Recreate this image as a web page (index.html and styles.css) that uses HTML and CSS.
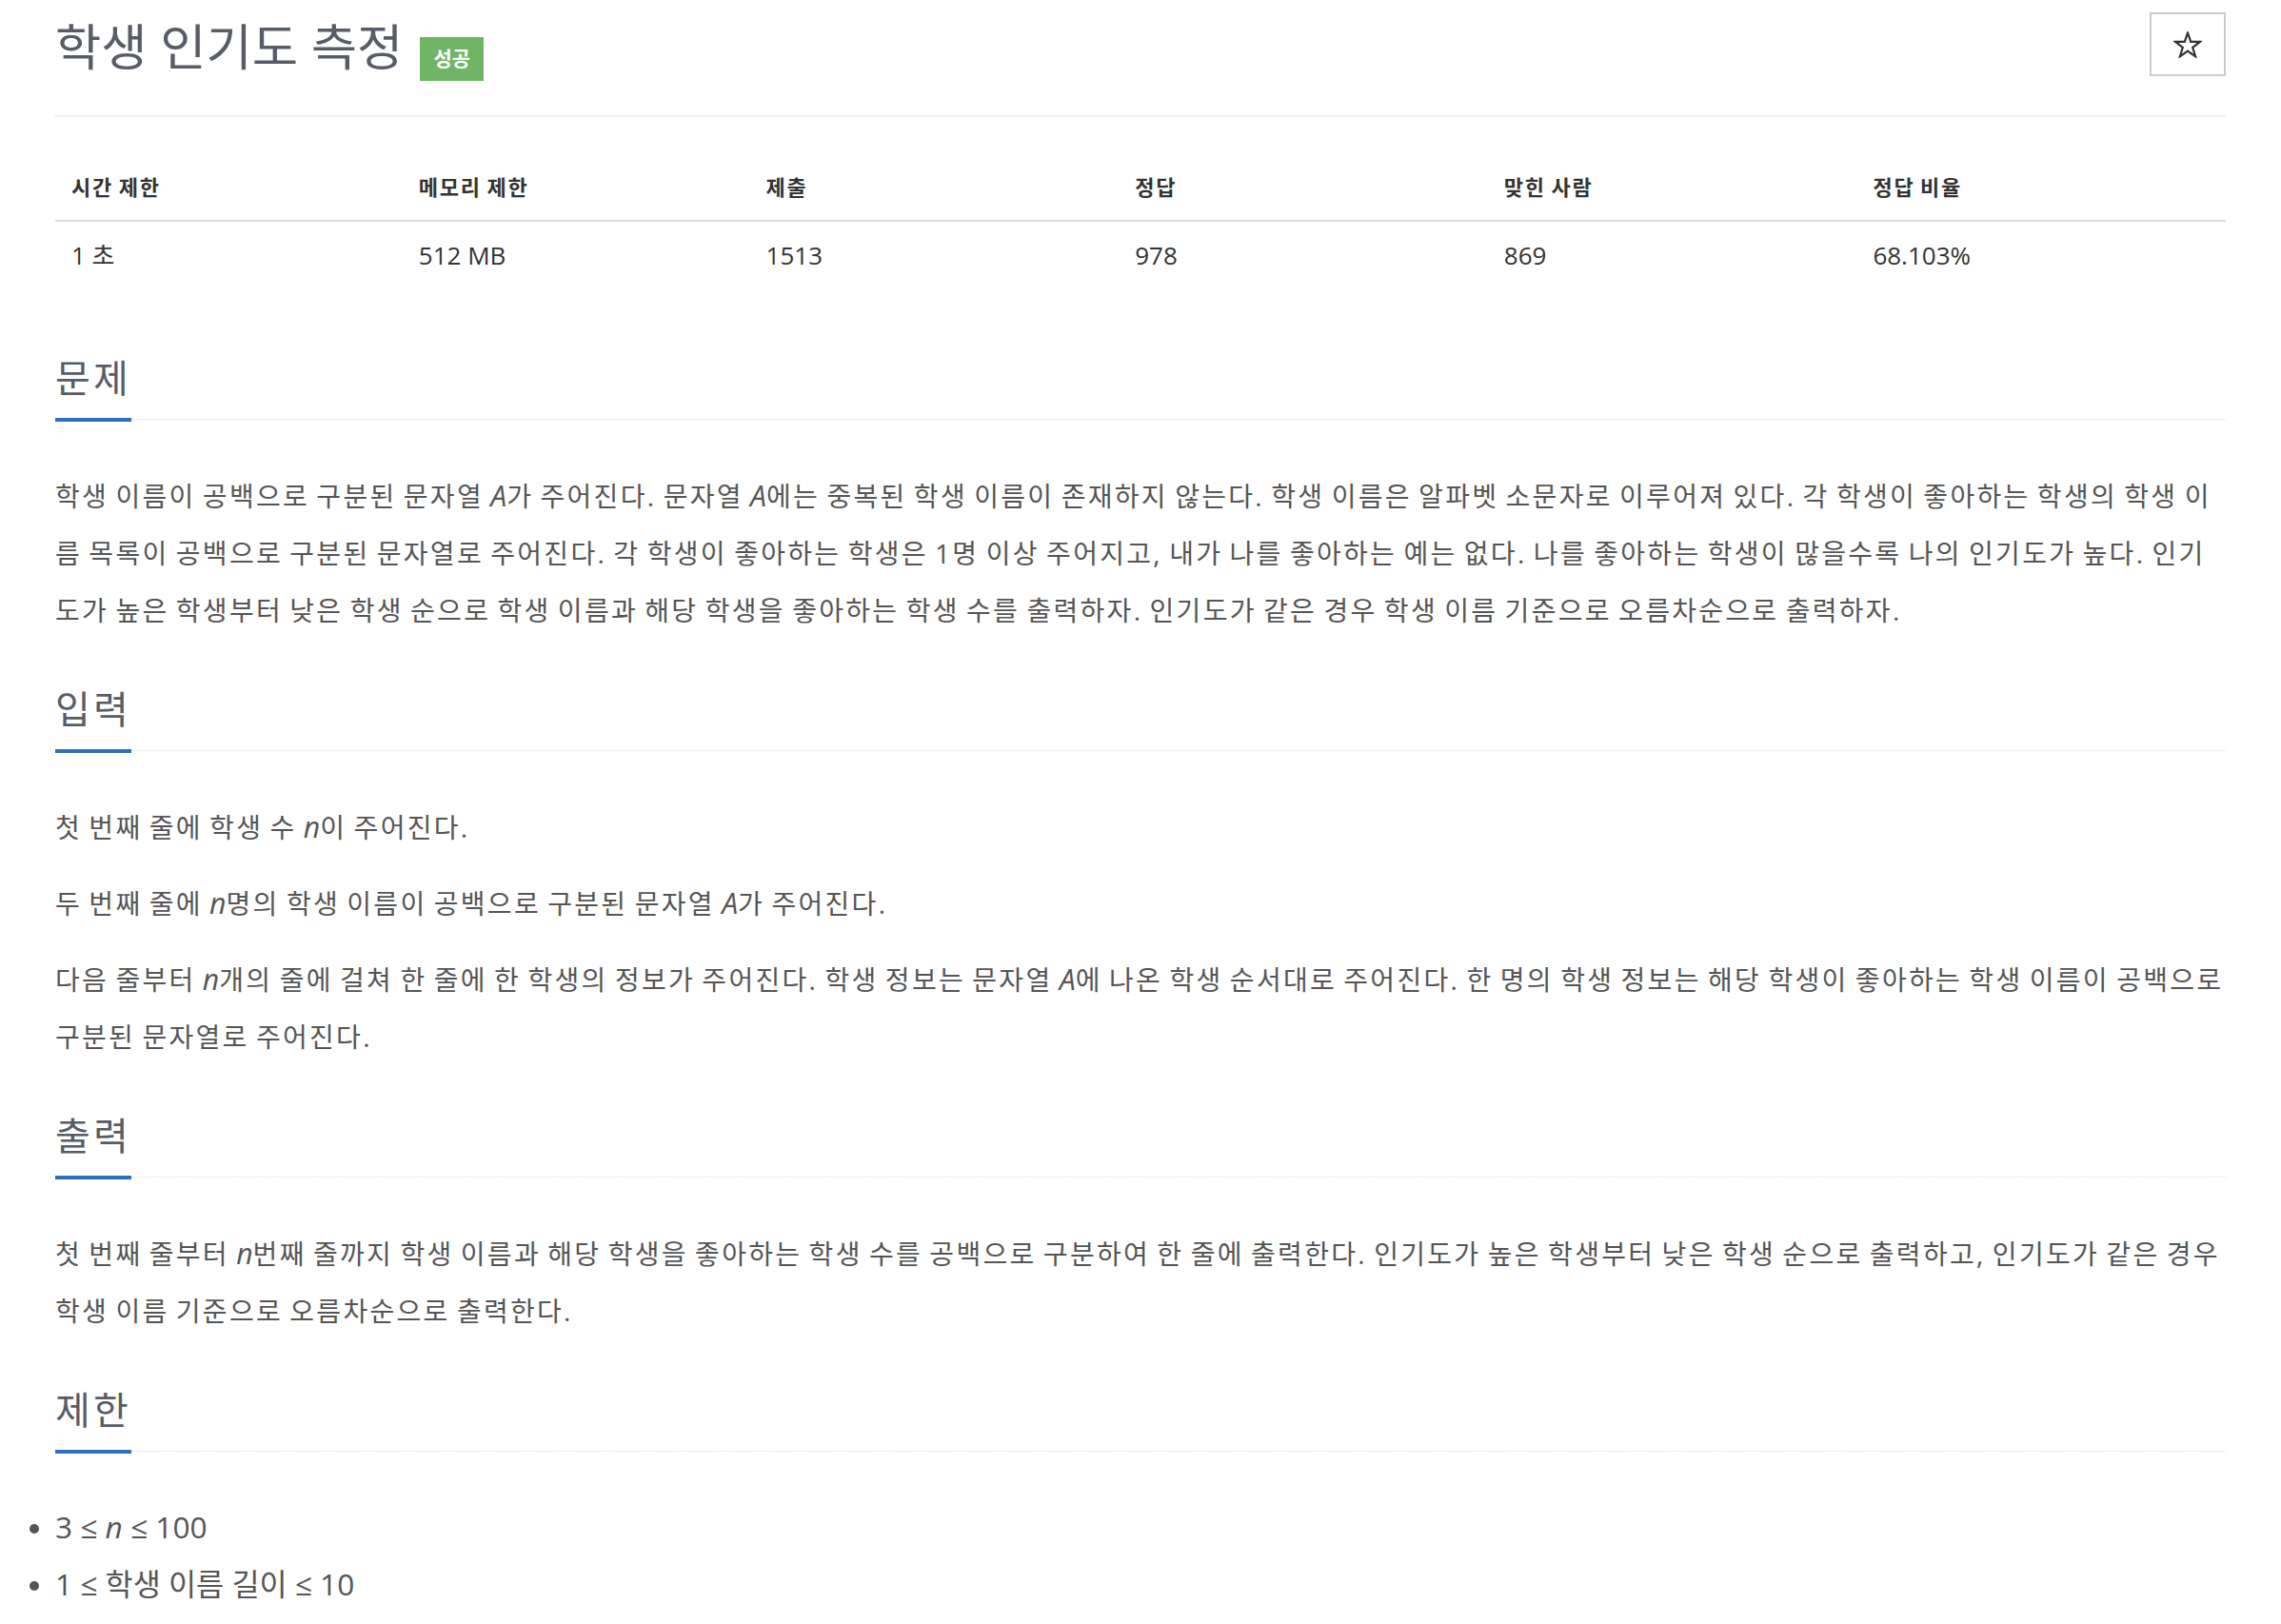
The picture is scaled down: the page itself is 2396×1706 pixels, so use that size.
FILE: index.html
```html
<!DOCTYPE html>
<html lang="ko">
<head>
<meta charset="utf-8">
<title>학생 인기도 측정</title>
<link rel="stylesheet" href="styles.css">
</head>
<body>
<div class="page">
  <header class="page-header">
    <h1 class="title"><span class="title-text">학생 인기도 측정</span><span class="label-success">성공</span></h1>
    <button class="star-btn" type="button" aria-label="즐겨찾기">
      <svg class="star-icon" width="30" height="28" viewBox="0 0 30 28"><path d="M15 1.5 L18.2 10.8 L28 10.9 L20.2 16.8 L23.1 26.3 L15 20.6 L6.9 26.3 L9.8 16.8 L2 10.9 L11.8 10.8 Z" fill="none" stroke="#333" stroke-width="2.2" stroke-linejoin="miter"/></svg>
    </button>
  </header>

  <table class="info">
    <colgroup>
      <col class="c16"><col class="c16"><col class="c17"><col class="c17"><col class="c17"><col class="c17">
    </colgroup>
    <thead>
      <tr><th>시간 제한</th><th>메모리 제한</th><th>제출</th><th>정답</th><th>맞힌 사람</th><th>정답 비율</th></tr>
    </thead>
    <tbody>
      <tr><td>1 초</td><td>512 MB</td><td>1513</td><td>978</td><td>869</td><td>68.103%</td></tr>
    </tbody>
  </table>

  <section class="problem-section">
    <div class="headline"><h2>문제</h2></div>
    <div class="problem-text">
      <p>학생 이름이 공백으로 구분된 문자열 <span class="math"><i>A</i></span>가 주어진다. 문자열 <span class="math"><i>A</i></span>에는 중복된 학생 이름이 존재하지 않는다. 학생 이름은 알파벳 소문자로 이루어져 있다. 각 학생이 좋아하는 학생의 학생 이름 목록이 공백으로 구분된 문자열로 주어진다. 각 학생이 좋아하는 학생은 1명 이상 주어지고, 내가 나를 좋아하는 예는 없다. 나를 좋아하는 학생이 많을수록 나의 인기도가 높다. 인기도가 높은 학생부터 낮은 학생 순으로 학생 이름과 해당 학생을 좋아하는 학생 수를 출력하자. 인기도가 같은 경우 학생 이름 기준으로 오름차순으로 출력하자.</p>
    </div>
  </section>

  <section class="problem-section">
    <div class="headline"><h2>입력</h2></div>
    <div class="problem-text">
      <p>첫 번째 줄에 학생 수 <span class="math"><i>n</i></span>이 주어진다.</p>
      <p>두 번째 줄에 <span class="math"><i>n</i></span>명의 학생 이름이 공백으로 구분된 문자열 <span class="math"><i>A</i></span>가 주어진다.</p>
      <p>다음 줄부터 <span class="math"><i>n</i></span>개의 줄에 걸쳐 한 줄에 한 학생의 정보가 주어진다. 학생 정보는 문자열 <span class="math"><i>A</i></span>에 나온 학생 순서대로 주어진다. 한 명의 학생 정보는 해당 학생이 좋아하는 학생 이름이 공백으로 구분된 문자열로 주어진다.</p>
    </div>
  </section>

  <section class="problem-section">
    <div class="headline"><h2>출력</h2></div>
    <div class="problem-text">
      <p>첫 번째 줄부터 <span class="math"><i>n</i></span>번째 줄까지 학생 이름과 해당 학생을 좋아하는 학생 수를 공백으로 구분하여 한 줄에 출력한다. 인기도가 높은 학생부터 낮은 학생 순으로 출력하고, 인기도가 같은 경우 학생 이름 기준으로 오름차순으로 출력한다.</p>
    </div>
  </section>

  <section class="problem-section">
    <div class="headline"><h2>제한</h2></div>
    <div class="problem-text">
      <ul class="limits">
        <li><span class="math">3 ≤ <i>n</i> ≤ 100</span></li>
        <li><span class="math">1 ≤ 학생 이름 길이 ≤ 10</span></li>
      </ul>
    </div>
  </section>
</div>
</body>
</html>
```

FILE: styles.css
```css
* {
  box-sizing: border-box;
}

html, body {
  margin: 0;
  padding: 0;
  background: #ffffff;
}

body {
  font-family: "Open Sans", "Noto Sans CJK KR", sans-serif;
  color: #555555;
}

.page {
  padding: 13px 58px 40px;
}

/* ---------- header ---------- */
.page-header {
  display: flex;
  justify-content: space-between;
  align-items: flex-start;
  height: 110px;
  border-bottom: 2px solid #eeeeee;
}

.title {
  display: flex;
  align-items: baseline;
  gap: 18px;
  margin: 6px 0 0;
  font-size: 52.5px;
  font-weight: 400;
  line-height: 60px;
  color: #575c66;
}

.label-success {
  display: inline-block;
  padding: 12px 14px 13px;
  font-size: 21px;
  line-height: 21px;
  font-weight: 700;
  color: #ffffff;
  background: #70b565;
}

.star-btn {
  display: flex;
  align-items: center;
  justify-content: center;
  width: 80px;
  height: 67px;
  padding: 0;
  border: 2px solid #cccccc;
  background: #ffffff;
}

.star-icon {
  display: block;
}

/* ---------- info table ---------- */
.info {
  width: 100%;
  table-layout: fixed;
  border-collapse: separate;
  border-spacing: 0;
  margin: 40px 0 73px;
  color: #333333;
}

.c16 { width: 16%; }
.c17 { width: 17%; }

.info th {
  text-align: left;
  font-size: 22px;
  font-weight: 700;
  line-height: 30px;
  letter-spacing: 0.08em;
  word-spacing: -0.08em;
  padding: 18px 17px 20px;
  border-bottom: 2px solid #dddddd;
}

.info td {
  text-align: left;
  font-size: 26px;
  line-height: 30px;
  padding: 20px 17px 18px;
}

/* ---------- sections ---------- */
.problem-section {
  margin-bottom: 51px;
}

.headline {
  display: flex;
  border-bottom: 1px dotted #d6dce5;
  margin-bottom: 50px;
}

.headline h2 {
  margin: 0 0 -3px;
  padding-bottom: 19px;
  font-size: 40px;
  font-weight: 400;
  line-height: 46px;
  letter-spacing: 0.08em;
  color: #575c66;
  border-bottom: 4px solid #2f70b8;
}

.problem-text {
  font-size: 28px;
  line-height: 60px;
  letter-spacing: 0.082em;
  word-spacing: -0.082em;
  color: #555555;
}

.problem-text p {
  margin: 0 0 20px;
}

.math {
  font-size: 1.08em;
  line-height: 1;
  letter-spacing: 0;
  word-spacing: 0;
}

.math i {
  font-style: italic;
}

.limits {
  margin: 0 0 20px;
  padding-left: 0;
  list-style: disc outside;
}

.limits .math {
  font-size: 1.13em;
}
```
